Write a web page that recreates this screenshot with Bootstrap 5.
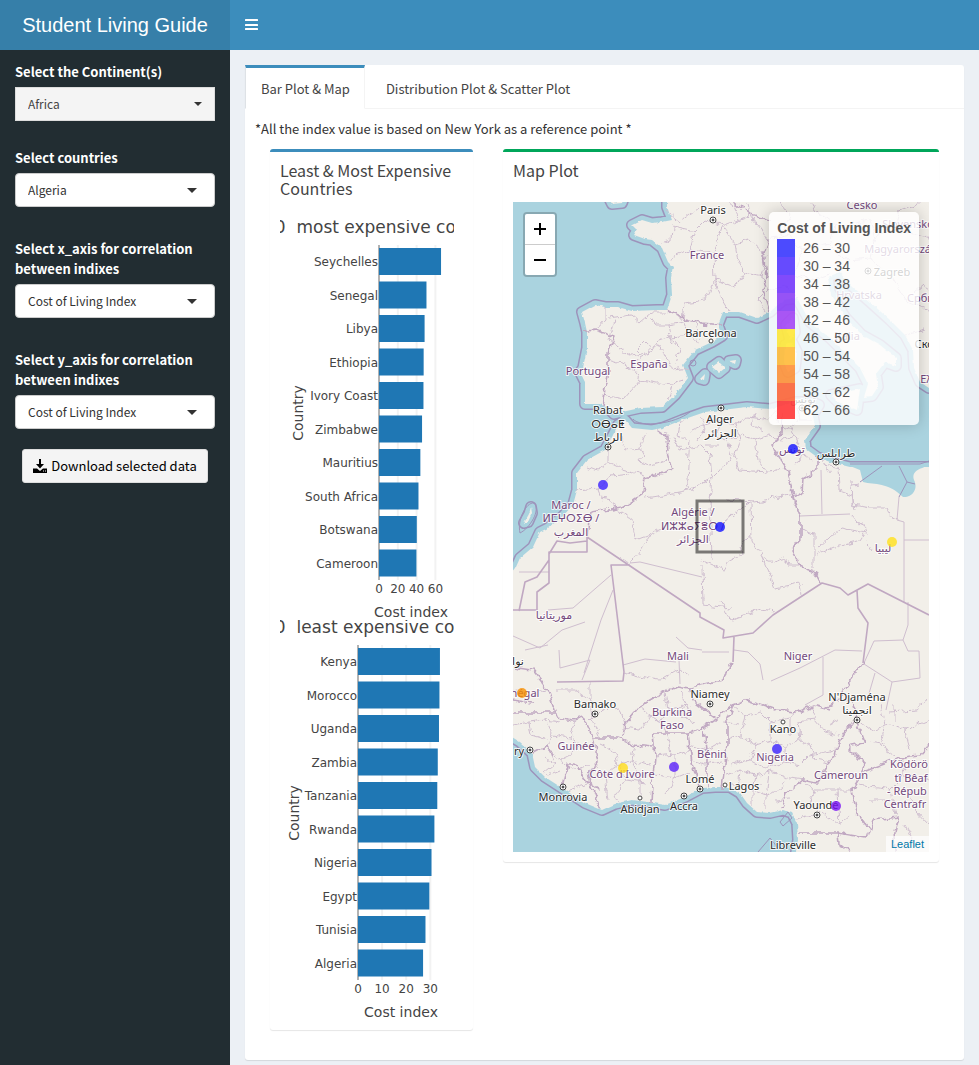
<!DOCTYPE html>
<html lang="en">
<head>
<meta charset="utf-8">
<meta name="viewport" content="width=device-width, initial-scale=1">
<title>Student Living Guide</title>
<link rel="stylesheet" href="https://cdn.jsdelivr.net/npm/bootstrap@5.3.0/dist/css/bootstrap.min.css">
<style>
  body { font-family: "Noto Sans CJK SC", "Noto Sans", sans-serif; font-size: 13px; line-height: 20px; color: #333; background: #ecf0f5; }
  .topbar { height: 50px; background: #3c8dbc; }
  .brand { width: 230px; font: 20px/50px "Liberation Sans", Arial, sans-serif; background: #367fa9; color: #fff; }
  .menu-btn { width: 42px; height: 48px; color: #fff; background: none; border: 0; padding: 0; }
  .side { width: 230px; background: #222d32; min-height: calc(100vh - 50px); padding: 12px 15px; }
  .side label { color: #fff; font-weight: 700; display: block; margin-bottom: 5px; }
  .pick { height: 34px; padding: 6px 12px; font-size: 12px; line-height: 20px; color: #333; border: 1px solid #ccc; border-radius: 4px; margin-bottom: 32px;
    background-image: url("data:image/svg+xml,%3csvg xmlns='http://www.w3.org/2000/svg' viewBox='0 0 10 5'%3e%3cpath fill='%23333' d='M0 0h10L5 5z'/%3e%3c/svg%3e");
    background-size: 10px 5px; background-position: right 17px center; }
  .pick-flat { background-color: #f4f4f4; border-color: #ddd; border-radius: 0; color: #444; background-size: 8px 4px; background-position: right 12px center; margin-bottom: 27px; }
  .get { height: 34px; margin-top: 20px; padding: 0 10px; font-size: 13px; line-height: 20px; background: #f4f4f4; border: 1px solid #ddd; border-radius: 3px; color: #000; }
  .content-area { padding: 15px 15px 5px; min-width: 0; }
  .tabbox { background: #fff; border-radius: 3px; box-shadow: 0 1px 1px rgba(0,0,0,.1); }
  .tabbox .nav-tabs { border-bottom: 1px solid #f4f4f4; }
  .tabbox .nav-item { margin-right: 5px; }
  .tabbox .nav-link { height: 44px; padding: 11px 14px 9px 15px; color: #444; border: 1px solid transparent; border-top: 3px solid transparent; border-radius: 0; }
  .tabbox .nav-link.active { border-top-color: #3c8dbc; border-right-color: #f4f4f4; color: #444; }
  .tab-body { padding: 10px; }
  .tab-body > p { margin-bottom: 10px; }
  .panel { border-top: 3px solid #3c8dbc; border-radius: 3px; background: #fff; box-shadow: 0 1px 1px rgba(0,0,0,.1); margin-bottom: 20px; }
  .panel-green { border-top-color: #00a65a; }
  .panel h3 { font-size: 16px; line-height: 18px; font-weight: 400; color: #444; margin: 0; padding: 9px 10px 13px; }
  .panel-in { padding: 10px; }
  .g-col { padding: 0 15px; }
  .chart { display: block; width: 100%; height: 400px; overflow: hidden; }
  .charts { padding-right: 9px; }
  .chart text { font-family: "DejaVu Sans", Verdana, sans-serif; font-size: 12px; fill: #444; }
  .chart .ttl { font-size: 17px; }
  .chart .axt { font-size: 14px; }
  .mapwrap { height: 650px; background: #aad3df; overflow: hidden; }
  .mapwrap > svg { width: 100%; height: 100%; display: block; }
  .zoomer { left: 10px; top: 10px; border: 2px solid rgba(0,0,0,.2); background-clip: padding-box; border-radius: 4px; width: 34px; }
  .zoomer button { width: 30px; height: 30px; background: #fff; border: 0; padding: 0; display: block; color: #000; }
  .zoomer button:first-child { height: 31px; border-bottom: 1px solid #ccc; border-radius: 2px 2px 0 0; }
  .zoomer button:last-child { border-radius: 0 0 2px 2px; }
  .zoomer svg { display: block; margin: 0 auto; }
  .key { right: 10px; top: 10px; padding: 6px 8px; font: 14px/18px "Liberation Sans", Arial, sans-serif; color: #555; background: rgba(255,255,255,.8); box-shadow: 0 0 15px rgba(0,0,0,.2); border-radius: 5px; }
  .key ul { margin: 0; padding: 0; list-style: none; }
  .key strong { display: block; line-height: 21px; white-space: nowrap; }
  .key i { width: 18px; height: 18px; margin-right: 8px; opacity: .7; }
  .credit { right: 0; bottom: 0; padding: 0 5px; font: 11px/16px "Liberation Sans", Arial, sans-serif; background: rgba(255,255,255,.7); }
  .credit a { color: #0078a8; text-decoration: none; }
  .thin { fill: none; stroke: #cfbecf; stroke-width: 1; }
  .state { fill: none; stroke: #c0a8c2; stroke-width: 1.600; stroke-linejoin: round; }
  .mapwrap text { font-family: "Noto Sans", "DejaVu Sans", sans-serif; font-size: 11px; text-anchor: middle; paint-order: stroke; stroke: #fff; stroke-opacity: .8; stroke-width: 2px; stroke-linejoin: round; fill: #2b2b2b; }
  .mapwrap .land-name text { fill: #73497c; }
</style>
</head>
<body>
<header class="topbar d-flex">
  <div class="brand text-center flex-shrink-0">Student Living Guide</div>
  <button class="menu-btn" type="button" aria-label="Toggle navigation">
    <svg width="13" height="12" viewBox="0 0 13 12" fill="currentColor"><rect width="13" height="2" rx=".5"/><rect y="5" width="13" height="2" rx=".5"/><rect y="9" width="13" height="2" rx=".5"/></svg>
  </button>
</header>
<div class="d-flex">
  <aside class="side flex-shrink-0">
    <label for="continent">Select the Continent(s)</label>
    <select id="continent" class="form-select pick pick-flat"><option>Africa</option></select>
    <label for="country">Select countries</label>
    <select id="country" class="form-select pick"><option>Algeria</option></select>
    <label for="xaxis">Select x_axis for correlation between indixes</label>
    <select id="xaxis" class="form-select pick"><option>Cost of Living Index</option></select>
    <label for="yaxis">Select y_axis for correlation between indixes</label>
    <select id="yaxis" class="form-select pick mb-0"><option>Cost of Living Index</option></select>
    <div class="d-flex justify-content-center">
      <button type="button" class="btn get d-flex align-items-center text-nowrap">
        <svg class="me-1" width="14" height="14" viewBox="0 0 14 14"><path d="M6 0h2v5h3L7 9.500 3 5h3z"/><path d="M0 9.500h4L7 12l3-2.500h4V14H0z"/><path d="M10 12h1M12 12h1" stroke="#f4f4f4"/></svg>
        <span>Download selected data</span>
      </button>
    </div>
  </aside>

  <main class="content-area flex-grow-1">
    <div class="tabbox">
      <ul class="nav nav-tabs">
        <li class="nav-item"><a class="nav-link active" href="#bars">Bar Plot &amp; Map</a></li>
        <li class="nav-item"><a class="nav-link" href="#dist">Distribution Plot &amp; Scatter Plot</a></li>
      </ul>
      <div id="bars" class="tab-body">
        <p>*All the index value is based on New York as a reference point *</p>
        <div class="row g-0 align-items-start">
          <div class="col-4 g-col">
            <section class="panel">
              <h3>Least &amp; Most Expensive Countries</h3>
              <div class="panel-in"><div class="charts" id="charts"></div></div>
            </section>
          </div>
          <div class="col-8 g-col">
            <section class="panel panel-green">
              <h3>Map Plot</h3>
              <div class="panel-in">
                <div class="mapwrap position-relative">
<svg viewBox="513 202 416 650" preserveAspectRatio="xMidYMid slice">
  <defs>
    <filter id="rough" filterUnits="userSpaceOnUse" x="500" y="190" width="440" height="675"><feTurbulence type="fractalNoise" baseFrequency=".12" numOctaves="3" seed="4"/><feDisplacementMap in="SourceGraphic" scale="8" xChannelSelector="R" yChannelSelector="G"/></filter>
    <filter id="shore" filterUnits="userSpaceOnUse" x="500" y="190" width="440" height="675"><feTurbulence type="fractalNoise" baseFrequency=".2" numOctaves="2" seed="2"/><feDisplacementMap in="SourceGraphic" scale="3" xChannelSelector="R" yChannelSelector="G"/></filter>
    <g id="lands" stroke-linejoin="round">
      <path d="M667 190V207L672 220 662 222 652 223 642 220 632 225 637 230 634 235 645 239 652 240 662 248 668 262 673 267 671 278 672 295 667 310 657 310 632 311 618 307 605 307 595 305 582 312 585 323 587 332 587 348 583 368 580 372 585 382 585 404 600 404 608 408 614 414 622 412 640 408 662 407 675 395 688 378 683 365 695 350 712 342 722 336 718 325 723 312 740 312 757 318 770 312 783 300 797 298 810 322 830 338 845 353 860 368 868 384 864 397 872 396 878 387 876 374 885 362 896 366 896 358 880 345 862 335 845 317 830 292 828 277 840 272 852 286 870 302 890 320 905 335 913 350 914 368 920 382 929 388H950V190Z"/>
      <path d="M605 190L612 204 622 203 627 190Z"/>
      <path d="M785 345L792 342 797 352 795 368 788 372 784 362Z"/><path d="M786 325L793 318 795 332 790 340Z"/><path d="M831 395L860 389 857 410 838 402Z"/>
      <path d="M712 367L719 362 725 368 719 373Z"/><path d="M700 379L705 374 704 380Z"/><path d="M729 361L736 360 735 364Z"/>
      <path d="M524 523L529 514 531 507 532 513 528 522Z"/>
      <path d="M500 585L516 567 520 558 533 547 540 532 548 528 562 517 573 505 577 490 577 473 587 460 605 450 612 437 618 425 625 420 632 428 652 430 662 428 682 420 705 412 722 410 747 407 770 409 795 402 812 402 819 405 813 415 815 426 805 440 806 449 817 457 830 462 850 467 950 467V870H793L798 840 797 823 792 813 783 810 770 813 757 812 747 803 740 793 730 787 715 787 702 788 685 797 665 805 648 802 632 800 615 804 602 810 585 803 562 788 545 777 535 767 532 753 520 742 500 730Z"/>
    </g>
  </defs>
  <g fill="none">
    <use href="#lands" stroke="#9d93bb" stroke-width="12"/>
    <use href="#lands" stroke="#aad3df" stroke-width="9"/>
  </g>
  <use href="#lands" fill="#f2efe9" filter="url(#shore)"/>
  <path d="M850 466L860 470 863 482C875 485 888 482 903 497 911 498 919 490 914 480 911 470 921 469 929 465L928 464Z" fill="#aad3df"/>
  <path d="M850 464H920L929 461M860 482L882 466M899 466L907 482 899 497M907 482L915 484" fill="none" stroke="#9d93bb"/>
  <g class="thin" filter="url(#rough)">
    <path d="M667 212L680 222 698 208M673 228L672 240 660 243M672 226L695 231 706 220 722 226 738 220 735 202M695 231L690 250 672 258M690 250L714 253 718 238 722 226M714 253L715 280 705 300 684 303 682 320M715 280L735 287 745 272 762 276 766 255 750 240 735 244 722 226M745 272L738 260 735 244M715 280L722 300 728 310M762 276L768 290 758 300 765 312M738 220L750 215 760 228 768 240M750 215L748 202M768 290L785 285 797 298M768 240L790 235 802 250 830 245 845 260 870 258 890 275 905 300 929 310M802 250L795 275 815 280 830 275M830 245L835 225 815 210 812 202M870 258L875 238 895 228 929 240M845 225L870 220 875 238M895 228L900 210 922 202M905 300L922 285 929 290M905 335L925 330M780 202L790 215 780 235M728 202L738 210"/>
    <path d="M605 307L605 320 596 330M608 318L632 315 640 322 652 312 665 312M615 320L609 340 630 356 650 352 656 342 670 337 668 325 655 325 650 318M656 342L665 355 672 370 688 368M650 352L635 360 632 370 640 380 670 385 685 380M608 360L625 365 632 370M606 395L625 398 640 380M670 337L690 335 697 345M668 325L685 322 690 335M650 352L646 342 636 352M670 337L680 350 675 365M672 385L668 400M695 322L700 340"/>
    <path d="M608 450L608 462 620 468 645 475M587 466L597 470 608 462M577 490L598 488 612 476 630 474M598 488L600 498 612 500 615 508M620 437L625 450 640 448 646 432M640 448L644 455 638 462 650 465 667 460M665 430L668 437M680 422L678 436 690 440 687 478 690 490M672 435L680 450 700 445 710 455 712 478M690 432L705 425 720 420 735 425 748 418 765 420 775 412M700 418L705 428 698 440M720 420L715 435 728 440 742 435 755 440 770 435 782 440M735 425L740 440 735 455 740 470 768 472 788 470M755 412L752 425 762 432M755 440L758 460 768 472M728 440L732 455 720 470 712 478M705 445L720 445M712 478L690 490 645 498M712 478L710 500 712 560M727 500L755 502 795 494M727 520L742 508 755 502M775 410L778 425 790 428 800 420 812 420M782 440L795 436 800 448M790 428L795 436M795 462L805 455 812 460M797 407L800 420"/>
    <path d="M838 465L839 490 852 495 855 510M825 462L830 475M852 482L853 505 870 508 885 508 892 518 899 520M822 458L825 465 840 468M860 484L852 485M850 515L857 523 868 528 860 540 840 545 816 555M867 533L840 528 818 548M800 530L814 534 814 570M867 540L873 550M751 505L752 540 762 558 773 562 785 558 788 565 799 565M762 558L775 588 800 583 802 595M752 535L740 545 742 555 730 560 724 570 702 560M702 565L703 605 732 608M720 600L732 620 760 610 775 612M590 512L615 508 632 520 637 540 650 535 660 530M650 535L640 550 630 563 620 558"/>
  </g>
  <g class="thin">
    <path d="M821 470L822 514M800 516L850 514M904 522V602M904 540H929M899 497L897 520 904 522M630 563L640 562 702 577M611 575L573 608 548 610M613 590L601 620 584 673M519 572H549M734 650L748 652 760 664 763 680M823 657V695L805 705M771 681L800 668 835 650 862 651M864 663L874 641 903 640 908 651H919L920 678 892 682M903 640L908 625V602M864 664L892 682M875 673L868 697M892 682L886 710M676 637L688 648 702 650M623 665L645 659 676 662M679 660L680 684M702 652L729 652M513 636L540 648 562 630 585 622M548 645L525 650M559 650L560 668 590 660 582 680"/>
  </g>
  <g class="thin" filter="url(#rough)">
    <path d="M623 672L640 676 660 680 680 668 690 675M590 682L590 700 602 710 620 708 625 725M590 700L592 718 600 738M602 710L590 722M557 690L575 690 590 700M640 707L650 715 640 730 622 728M650 715L660 722M665 694L668 710 660 722 665 733M668 710L685 705 692 710M680 690L685 705 680 718 695 722M513 690L530 695 545 690M513 725L530 722 532 735 548 740M530 722L545 720 560 722M545 720L552 735 570 738 575 720M552 735L548 750 560 760 570 755 580 745 595 745M560 760L575 770 590 765M548 775L560 770M570 790L585 785 590 775M570 738L580 745M545 757L555 765 545 773M600 745L615 752 618 765 605 775 598 770M618 765L635 760 650 765M618 765L625 780 615 795 618 803M625 780L645 783M605 775L608 800M635 745L632 760 640 775 640 800M655 757L675 755 690 750M655 775L675 778 690 772M675 755L675 778 665 795M668 735L672 755M690 760L705 765 722 762M690 745L708 750 722 742"/>
    <path d="M733 705L745 715 760 712 770 722 790 718 800 710M745 715L740 735 755 745 770 740 785 748 800 740 810 745M740 735L727 740M755 745L750 760 730 765M750 760L765 768 785 762 800 765 810 755 835 750M770 722L770 740M785 748L785 762M800 740L798 722 815 720 825 732 840 735M815 720L810 705M810 745L815 760 830 763M726 775L740 770 755 775 770 772 790 778 805 780M740 770L738 790M755 775L752 790 765 795 780 790 785 780M752 790L752 805M765 795L765 810M770 772L768 790M728 785L745 785 760 785M775 800L790 798M725 722L740 725M805 785L815 790 852 790M815 790L810 805 825 815 838 825 850 815M838 790L840 825M796 820L815 815M857 720L870 730 890 725 905 730 929 720M880 705L885 725 880 745 895 755M905 730L910 750M885 745L870 742M890 712L915 710 929 700M900 757L905 775 890 790 858 785M905 775L929 780M890 790L895 815M870 800L890 800M910 790L915 810 929 825M905 825L915 845M830 725L840 720M855 708L845 695M790 718L790 735M895 720L895 705"/>
  </g>
  <g class="state" filter="url(#rough)">
    <path d="M667 310L685 318 702 323 723 325M583 332L595 330 615 337 608 352 608 375 605 388 602 405M735 202L750 215 770 220M768 240L764 255 767 276 762 290 770 312"/>
    <path d="M657 430L667 437 668 453 673 470 645 478 643 493 622 507 590 512 587 537M782 412V433L772 447 788 470 793 498 800 517 800 540 793 550 803 570 818 575 822 583M817 457V470L803 480 802 493 793 498"/>
    <path d="M513 667L532 670 548 690 557 717 572 720 583 717 593 738 618 738 635 745 652 747M623 737L625 723 638 707 655 697 678 685 690 687 695 703 715 718M690 687L722 680 733 662M653 733H688L698 730 715 720 733 705 748 700 777 710 797 712 813 705 830 710M733 705L727 720 727 745 722 790M653 733L655 757 652 783 651 803M688 733L692 763 700 788M704 730L707 750 707 788M593 738L598 763 588 777 600 810M600 790L585 780 575 763 568 763 562 788M533 753L548 745 553 760M513 713H555M513 700L532 703"/>
    <path d="M863 663L843 690 838 702 827 708M853 720L840 740 830 763 817 783 803 780 787 793 782 808M853 705L857 722 865 743 847 747 863 763 860 777 852 790 857 813 870 830M863 772L887 763 903 757 920 755 929 745M798 833H837L867 838 873 820 898 817 893 837 895 860M837 833L838 845 850 850"/>
  </g>
  <path class="state" d="M587 537V552H549V583L537 592V610H513M587 541L570 543 557 541 549 554M549 560L537 577 525 582 519 611M587 537L700 613V617L724 630 723 638 753 633 773 615 822 583 840 588 848 595 868 584 929 615M630 565H611L624 672 623 681 557 682M857 590L858 608 868 623 863 663M734 637L733 662"/>
  <g fill="none" stroke="#9d93bb"><circle cx="693" cy="363" r="3"/><path d="M520 533C517 520 526 502 534 503 541 510 530 528 520 533ZM780 822L788 812 792 818 783 826ZM758 852L770 838 778 848M633 419C640 428 675 424 690 412"/></g>
  <g class="land-name">
    <text x="707" y="259">France</text><text x="649" y="368">España</text><text x="588" y="375">Portugal</text><text x="571" y="509">Maroc /</text><text x="571" y="522">ⵍⵎⵖⵔⵉⴱ /</text><text x="571" y="536">المغرب</text><text x="693" y="516">Algérie /</text><text x="693" y="530">ⵍⵣⵣⴰⵢⴻⵔ /</text><text x="693" y="543">الجزائر</text><text x="792" y="453">تونس</text><text x="883" y="552">ليبيا</text><text x="554" y="619">موريتانيا</text><text x="678" y="660">Mali</text><text x="798" y="660">Niger</text><text x="672" y="716">Burkina</text><text x="672" y="729">Faso</text><text x="576" y="750">Guinée</text><text x="525" y="697">négal</text><text x="622" y="778">Côte d'Ivoire</text><text x="712" y="758">Bénin</text><text x="775" y="761">Nigeria</text><text x="841" y="779">Cameroun</text><text x="909" y="768">Ködörö</text><text x="911" y="782">tî Bêaf</text><text x="907" y="795">- Répub</text><text x="905" y="808">Centrafr</text><text x="859" y="299">Hrvatska</text><text x="847" y="340">Italia</text><text x="901" y="253">Magyarország</text><text x="908" y="228">Slovensko</text><text x="862" y="209">Česko</text><text x="925" y="302">Србија</text><text x="935" y="383">Ελλάς</text>
  </g>
  <g><text x="713" y="214">Paris</text><text x="711" y="337">Barcelona</text><text x="608" y="414">Rabat</text><text x="608" y="428">ⵔⴱⴰⵟ</text><text x="608" y="441">الرباط</text><text x="720" y="423">Alger</text><text x="721" y="437">الجزائر</text><text x="803" y="403">تونس</text><text x="836" y="457">طرابلس</text><text x="518" y="665">نوا</text><text x="595" y="708">Bamako</text><text x="710" y="698">Niamey</text><text x="519" y="755">ry</text><text x="563" y="801">Monrovia</text><text x="640" y="813">Abidjan</text><text x="684" y="810">Accra</text><text x="700" y="783">Lomé</text><text x="744" y="790">Lagos</text><text x="783" y="733">Kano</text><text x="857" y="701">N'Djaména</text><text x="857" y="714">انجمينا</text><text x="816" y="809">Yaoundé</text><text x="793" y="849">Libreville</text><text x="892" y="276">Zagreb</text><text x="932" y="348">Скопје</text></g>
  <g fill="#fff" stroke="#444" id="towns"></g>
  <rect x="697" y="501" width="46" height="51" fill="none" stroke="#000" stroke-opacity=".5" stroke-width="3"/>
  <g id="pins" fill-opacity=".8"></g>
</svg>
                  <div class="zoomer position-absolute">
                    <button type="button" aria-label="Zoom in"><svg width="12" height="12" viewBox="0 0 12 12" stroke="#000" stroke-width="2"><path d="M0 6h12M6 0v12"/></svg></button>
                    <button type="button" aria-label="Zoom out"><svg width="12" height="12" viewBox="0 0 12 12" stroke="#000" stroke-width="2"><path d="M0 6h12"/></svg></button>
                  </div>
                  <div class="key position-absolute"><strong>Cost of Living Index</strong><ul id="key"></ul></div>
                  <div class="credit position-absolute"><a href="#leaflet">Leaflet</a></div>
                </div>
              </div>
            </section>
          </div>
        </div>
      </div>
    </div>
  </main>
</div>
<script src="https://cdn.jsdelivr.net/npm/bootstrap@5.3.0/dist/js/bootstrap.bundle.min.js"></script>
<script>
  // Horizontal bar charts: x0 is the axis position, scale is pixels per index unit
  const sets = [
    { title: '10\u00a0 most expensive countries', x0: 99, scale: .94, step: 20, label: 18, mid: 131,
      rows: [['Seychelles',66],['Senegal',50.5],['Libya',48.5],['Ethiopia',47.5],['Ivory Coast',47.3],['Zimbabwe',45.8],['Mauritius',44],['South Africa',42],['Botswana',40.2],['Cameroon',39.8]] },
    { title: '10\u00a0 least expensive countries', x0: 78, scale: 2.41, step: 10, label: 14, mid: 121,
      rows: [['Kenya',34],['Morocco',33.8],['Uganda',33.6],['Zambia',33.1],['Tanzania',32.9],['Rwanda',31.7],['Nigeria',30.5],['Egypt',29.6],['Tunisia',28],['Algeria',27]] }
  ];
  document.getElementById('charts').innerHTML = sets.map(s => {
    let g = '';
    for (let i = 0; i < 4; i++) {
      const x = s.x0 + i * s.step * s.scale;
      g += `<path d="M${x} 25V360" stroke="${i ? '#f2f2f2' : '#666'}" stroke-width="${i ? 2 : 1}"/><text x="${x}" y="373" text-anchor="middle">${i * s.step}</text>`;
    }
    s.rows.forEach(([n, v], i) => {
      const y = 28 + i * 33.5;
      g += `<rect x="${s.x0}" y="${y}" width="${v * s.scale}" height="27" fill="#1f77b4"/><text x="${s.x0 - 1}" y="${y + 18}" text-anchor="end">${n}</text>`;
    });
    return `<svg class="chart" viewBox="0 0 174 400"><text class="ttl" x="-16" y="13">${s.title}</text>${g}
      <text class="axt" x="${s.mid}" y="397" text-anchor="middle">Cost index</text>
      <text class="axt" transform="translate(${s.label + 5} 193) rotate(-90)" text-anchor="middle">Country</text></svg>`;
  }).join('');

  document.getElementById('key').innerHTML = ['#0000ff','#2500ff','#4b00fb','#6a0cf4','#8a12f2','#ffe100','#ffa800','#ff7300','#ff3a00','#ff0000']
    .map((c, i) => `<li class="d-flex"><i style="background:${c}"></i>${26 + i * 4} – ${30 + i * 4}</li>`).join('');

  document.getElementById('pins').innerHTML = [[603,485,'#3a20ff'],[720,527,'#1010ff'],[793,449,'#1010ff'],[892,542,'#ffe11a'],[522,693,'#f79000'],[623,768,'#ffdc1a'],[674,767,'#5a20fa'],[777,749,'#3a20ff'],[836,806,'#7a14f5']]
    .map(([x, y, c]) => `<circle cx="${x}" cy="${y}" r="5" fill="${c}"/>`).join('');

  document.getElementById('towns').innerHTML =
    [[713,220],[608,447],[721,408],[836,462],[595,714],[710,704],[530,750],[563,787],[684,796],[700,789],[857,720],[817,815],[868,271],[802,408]].map(([x, y]) => `<circle cx="${x}" cy="${y}" r="3"/><circle cx="${x}" cy="${y}" r="1" fill="#444"/>`).join('') +
    [[711,341],[640,798],[725,785],[783,722]].map(([x, y]) => `<circle cx="${x}" cy="${y}" r="2"/>`).join('');
</script>
</body>
</html>
